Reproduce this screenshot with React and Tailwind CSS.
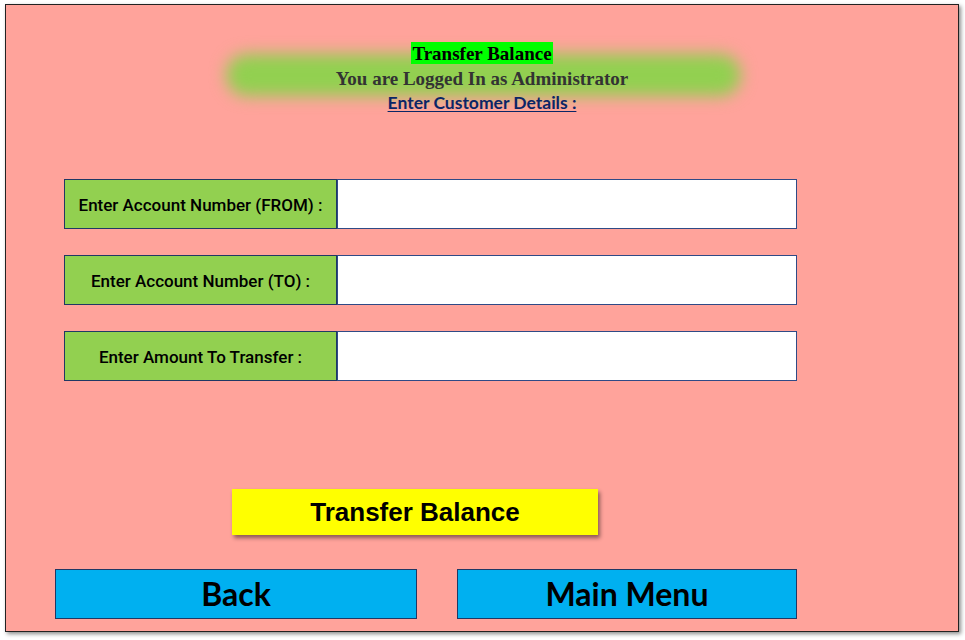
import React from 'react';

const rows = [
  'Enter Account Number (FROM) :',
  'Enter Account Number (TO) :',
  'Enter Amount To Transfer :',
];

function FieldRow({ label }) {
  return (
    <div className="flex h-[50px]">
      <div className="w-[273px] flex items-center justify-center pt-[3px] bg-[#92d050] border border-[#1f3864] text-[17px] font-medium text-black font-['Roboto',sans-serif]">
        {label}
      </div>
      <input className="w-[460px] bg-white border border-[#2f4a86] outline-none" />
    </div>
  );
}

export default function App() {
  return (
    <div className="w-[965px] h-[640px] bg-white pt-[4px] pl-[5px]">
      <div className="w-[954px] h-[628px] bg-[#ffa39b] border border-[#222] shadow-[2px_2px_4px_rgba(0,0,0,0.45)] flex flex-col">
        <div className="relative mt-[37px] flex flex-col items-center">
          <div className="absolute left-[220px] top-[12px] w-[515px] h-[42px] bg-[#92d050] rounded-[21px] blur-[8px]" />
          <div className="relative bg-[#00ff00] px-[1px] h-[22px] flex items-center text-[19px] leading-none font-bold text-black font-['Liberation_Serif',serif]">
            Transfer Balance
          </div>
          <div className="relative mt-[3px] text-[19px] leading-[24px] font-bold text-[#333333] font-['Liberation_Serif',serif]">
            You are Logged In as Administrator
          </div>
          <div className="relative mt-[1px] text-[17.5px] leading-[22px] font-bold text-[#0b2566] underline underline-offset-2 font-['Lato',sans-serif]">
            Enter Customer Details :
          </div>
        </div>

        <div className="mt-[65px] ml-[58px] flex flex-col gap-[26px]">
          {rows.map(r => (
            <FieldRow key={r} label={r} />
          ))}
        </div>

        <div className="mt-[108px] ml-[226px]">
          <button className="w-[366px] h-[46px] bg-[#ffff00] shadow-[2px_3px_4px_rgba(0,0,0,0.45)] text-[26px] font-bold text-black font-['Liberation_Sans',sans-serif]">
            Transfer Balance
          </button>
        </div>

        <div className="mt-[34px] ml-[49px] flex gap-[40px]">
          <button className="w-[362px] h-[50px] bg-[#00b0f0] border border-[#1f3864] text-[32px] font-bold text-black font-['Lato',sans-serif]">
            Back
          </button>
          <button className="w-[340px] h-[50px] bg-[#00b0f0] border border-[#1f3864] text-[32px] font-bold text-black font-['Lato',sans-serif]">
            Main Menu
          </button>
        </div>
      </div>
    </div>
  );
}
